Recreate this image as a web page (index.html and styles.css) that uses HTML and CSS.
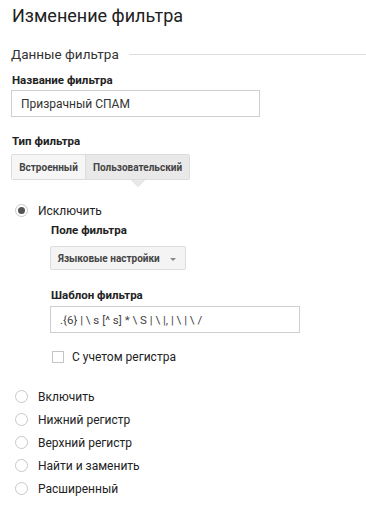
FILE: index.html
```html
<!DOCTYPE html>
<html lang="ru">
<head>
<meta charset="utf-8">
<link rel="stylesheet" href="styles.css">
</head>
<body>
<div class="page">
  <h1 class="title">Изменение фильтра</h1>
  <div class="section-head"><span>Данные фильтра</span><i class="rule"></i></div>

  <div class="label l-name">Название фильтра</div>
  <div class="input w-name">Призрачный СПАМ</div>

  <div class="label l-type">Тип фильтра</div>
  <div class="tabs">
    <div class="tab">Встроенный</div>
    <div class="tab active">Пользовательский</div>
  </div>

  <div class="radio-row first"><span class="radio checked"></span><span>Исключить</span></div>
  <div class="nested">
    <div class="label l-field">Поле фильтра</div>
    <div class="select"><span>Языковые настройки</span><span class="caret"></span></div>
    <div class="label l-pattern">Шаблон фильтра</div>
    <div class="input w-pattern pattern">.{6} | \ s [^ s] * \ S | \ |, | \ | \ /</div>
    <div class="check-row"><span class="checkbox"></span><span>С учетом регистра</span></div>
  </div>

  <div class="radios">
    <div class="radio-row"><span class="radio"></span><span>Включить</span></div>
    <div class="radio-row"><span class="radio"></span><span>Нижний регистр</span></div>
    <div class="radio-row"><span class="radio"></span><span>Верхний регистр</span></div>
    <div class="radio-row"><span class="radio"></span><span>Найти и заменить</span></div>
    <div class="radio-row"><span class="radio"></span><span>Расширенный</span></div>
  </div>
</div>
</body>
</html>
```
FILE: styles.css
```css
html, body {
  margin: 0;
  padding: 0;
  background: #fff;
}
body {
  font-family: Roboto, "Liberation Sans", Arial, sans-serif;
  color: #222;
  width: 366px;
  height: 508px;
  overflow: hidden;
}
.page {
  padding: 4px 0 0 11px;
}
.title {
  margin: 0;
  font-size: 18px;
  font-weight: 400;
  line-height: 24px;
  color: #212121;
  padding-left: 1px;
}
.section-head {
  display: flex;
  align-items: center;
  margin-top: 17px;
  height: 18px;
  font-size: 13.5px;
  color: #333;
}
.section-head .rule {
  flex: 1;
  height: 1px;
  background: #ddd;
  margin-left: 10px;
  margin-top: 1px;
}
.label {
  font-size: 11.5px;
  font-weight: 700;
  line-height: 14px;
  color: #222;
  padding-left: 1px;
}
.l-name { margin-top: 10px; }
.input {
  box-sizing: border-box;
  border: 1px solid #cfcfcf;
  height: 27px;
  display: flex;
  align-items: center;
  padding-left: 9px;
  font-size: 12px;
  color: #333;
  background: #fff;
  white-space: nowrap;
}
.w-name { width: 249px; margin-top: 3px; }
.l-type { margin-top: 17px; }
.tabs {
  display: inline-flex;
  margin-top: 6px;
  height: 26px;
  box-sizing: border-box;
  border: 1px solid #dcdcdc;
  border-radius: 2px;
  position: relative;
}
.tab {
  display: flex;
  align-items: center;
  justify-content: center;
  font-size: 10px;
  font-weight: 700;
  color: #444;
  background: #f6f6f6;
  white-space: nowrap;
  width: 73px;
}
.tab.active {
  width: 103px;
  background: #e9e9e9;
  border-left: 1px solid #dcdcdc;
  position: relative;
}
.tab.active::after {
  content: "";
  position: absolute;
  left: 50%;
  bottom: -7px;
  margin-left: -6px;
  border-left: 6px solid transparent;
  border-right: 6px solid transparent;
  border-top: 6px solid #e9e9e9;
}
.tab.active::before {
  content: "";
  position: absolute;
  left: 50%;
  bottom: -8px;
  margin-left: -7px;
  border-left: 7px solid transparent;
  border-right: 7px solid transparent;
  border-top: 7px solid #dcdcdc;
}
.radio-row {
  display: flex;
  align-items: center;
  height: 23px;
  font-size: 12px;
  color: #222;
  padding-left: 4px;
}
.radio-row.first { margin-top: 19px; }
.radio {
  box-sizing: border-box;
  width: 13px;
  height: 13px;
  border-radius: 50%;
  border: 1px solid #c8c8c8;
  background: #fff;
  margin-right: 10px;
  flex: none;
  position: relative;
}
.radio.checked::after {
  content: "";
  position: absolute;
  left: 2px;
  top: 2px;
  width: 7px;
  height: 7px;
  border-radius: 50%;
  background: #555;
}
.nested {
  padding-left: 39px;
}
.l-field { margin-top: 1px; }
.select {
  box-sizing: border-box;
  width: 136px;
  height: 24px;
  margin-top: 9px;
  border: 1px solid #ddd;
  border-radius: 2px;
  background: #f4f4f4;
  display: flex;
  align-items: center;
  justify-content: space-between;
  padding: 0 9px 0 7px;
  font-size: 10px;
  font-weight: 700;
  color: #444;
  white-space: nowrap;
}
.caret {
  width: 0;
  height: 0;
  border-left: 3.5px solid transparent;
  border-right: 3.5px solid transparent;
  border-top: 3.5px solid #888;
  margin-top: 2px;
}
.l-pattern { margin-top: 18px; }
.w-pattern { width: 250px; margin-top: 4px; height: 27px; }
.pattern { font-size: 11.5px; color: #444; }
.check-row {
  display: flex;
  align-items: center;
  margin-top: 17px;
  font-size: 12px;
  color: #222;
  height: 14px;
}
.checkbox {
  box-sizing: border-box;
  width: 12px;
  height: 12px;
  border: 1px solid #c4c4c4;
  background: #fff;
  margin: 0 8px 0 2px;
}
.radios {
  margin-top: 21px;
}
```
